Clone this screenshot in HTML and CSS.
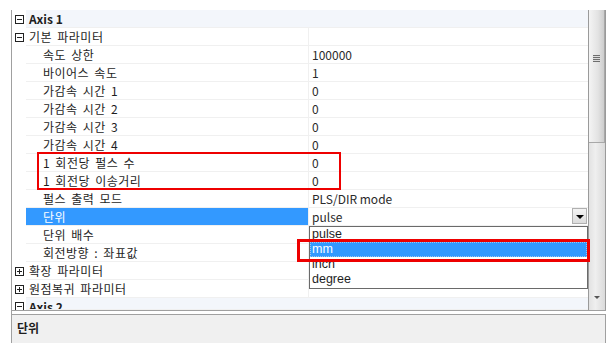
FILE: index.html
```html
<!DOCTYPE html>
<html>
<head>
<meta charset="utf-8">
<link rel="stylesheet" href="styles.css">
</head>
<body>
<div class="pg">
  <div class="main">
    <div class="rows">
      <div class="row cat"><span class="gut"><span class="box minus"></span></span><span class="full bold">Axis 1</span></div>
      <div class="row sub"><span class="gut"><span class="box minus"></span></span><span class="name sublabel">기본 파라미터</span><span class="val"></span></div>
      <div class="row"><span class="gut"></span><span class="name">속도 상한</span><span class="val">100000</span></div>
      <div class="row"><span class="gut"></span><span class="name">바이어스 속도</span><span class="val">1</span></div>
      <div class="row"><span class="gut"></span><span class="name">가감속 시간 1</span><span class="val">0</span></div>
      <div class="row"><span class="gut"></span><span class="name">가감속 시간 2</span><span class="val">0</span></div>
      <div class="row"><span class="gut"></span><span class="name">가감속 시간 3</span><span class="val">0</span></div>
      <div class="row"><span class="gut"></span><span class="name">가감속 시간 4</span><span class="val">0</span></div>
      <div class="row"><span class="gut"></span><span class="name">1 회전당 펄스 수</span><span class="val">0</span></div>
      <div class="row"><span class="gut"></span><span class="name">1 회전당 이송거리</span><span class="val">0</span></div>
      <div class="row"><span class="gut"></span><span class="name">펄스 출력 모드</span><span class="val">PLS/DIR mode</span></div>
      <div class="row"><span class="gut"></span><span class="name selected">단위</span><span class="val edit">pulse<span class="ddbtn"><span class="tri"></span></span></span></div>
      <div class="row"><span class="gut"></span><span class="name">단위 배수</span><span class="val"></span></div>
      <div class="row"><span class="gut"></span><span class="name">회전방향 : 좌표값</span><span class="val"></span></div>
      <div class="row sub"><span class="gut"><span class="box plus"></span></span><span class="name sublabel">확장 파라미터</span><span class="val"></span></div>
      <div class="row sub"><span class="gut"><span class="box plus"></span></span><span class="name sublabel">원점복귀 파라미터</span><span class="val"></span></div>
      <div class="row cat last"><span class="gut"><span class="box minus"></span></span><span class="full bold">Axis 2</span></div>
    </div>
    <div class="scroll">
      <div class="thumb"><span class="grip"></span></div>
      <div class="track"></div>
      <div class="arrow"></div>
    </div>
    <div class="ddlist">
      <div class="item">pulse</div>
      <div class="item sel">mm</div>
      <div class="item">inch</div>
      <div class="item">degree</div>
    </div>
    <div class="redbox r1"></div>
    <div class="redbox r2"></div>
  </div>
  <div class="desc"><span class="dtitle">단위</span></div>
</div>
</body>
</html>
```

FILE: styles.css
```css
html, body {
  margin: 0;
  padding: 0;
  background: #ffffff;
}
body {
  font-family: "Noto Sans CJK KR", "Noto Sans", sans-serif;
  font-size: 12px;
  color: #1e1e1e;
}
.pg {
  margin: 10px 0 0 11px;
  width: 594px;
  height: 333px;
  border-left: 1px solid #a0a0a0;
  display: flex;
  flex-direction: column;
}
.main {
  position: relative;
  height: 300px;
  display: flex;
  border-bottom: 1px solid #a0a0a0;
  overflow: hidden;
}
.rows {
  width: 576px;
  display: flex;
  flex-direction: column;
}
.row {
  height: 18px;
  flex: none;
  display: flex;
  line-height: 17px;
}
.row.last {
  height: 12px;
  overflow: hidden;
  align-items: flex-start;
}
.row.last .full {
  height: 12px;
  line-height: 12px;
  padding-top: 3px;
  box-sizing: border-box;
  overflow: hidden;
}
.row.last .gut {
  height: 12px;
  align-items: flex-start;
  padding-top: 4px;
  overflow: hidden;
}
.gut {
  width: 14px;
  flex: none;
  display: flex;
  align-items: center;
  justify-content: center;
  padding-left: 1px;
  box-sizing: border-box;
}
.name {
  width: 283px;
  flex: none;
  border-right: 1px solid #f0f0f0;
  border-bottom: 1px solid #f0f0f0;
  padding-left: 17px;
  box-sizing: border-box;
  white-space: nowrap;
  letter-spacing: 0.5px;
  word-spacing: 2px;
}
.name.sublabel {
  padding-left: 3px;
}
.val {
  flex: 1;
  border-bottom: 1px solid #f0f0f0;
  padding-left: 3px;
  color: #2a2a2a;
  white-space: nowrap;
  position: relative;
}
.full {
  flex: 1;
  background: #f3f6fb;
  padding-left: 3px;
  border-bottom: 1px solid #f0f0f0;
}
.bold {
  font-weight: bold;
}
.selected {
  background: #3399ff;
  color: #ffffff;
}
.edit {
  display: flex;
  justify-content: space-between;
}
.ddbtn {
  width: 15px;
  height: 16px;
  margin-right: 1px;
  background: linear-gradient(#f4f4f4, #dcdcdc);
  border: 1px solid #b0b0b0;
  box-sizing: border-box;
  display: flex;
  align-items: center;
  justify-content: center;
}
.tri {
  width: 0;
  height: 0;
  border-left: 4px solid transparent;
  border-right: 4px solid transparent;
  border-top: 4px solid #000;
  margin-top: 2px;
}
.box {
  width: 9px;
  height: 9px;
  flex: none;
  border: 1px solid #222;
  box-sizing: border-box;
  position: relative;
  background: #fff;
}
.box::before {
  content: "";
  position: absolute;
  left: 1px;
  top: 3px;
  width: 5px;
  height: 1px;
  background: #222;
}
.box.plus::after {
  content: "";
  position: absolute;
  left: 3px;
  top: 1px;
  width: 1px;
  height: 5px;
  background: #222;
}
.scroll {
  width: 16px;
  flex: none;
  border-left: 1px solid #9a9a9a;
  border-right: 1px solid #9a9a9a;
  background: linear-gradient(90deg, #e2e2e2, #efefef 40%, #dadada);
  display: flex;
  flex-direction: column;
}
.thumb {
  height: 133px;
  flex: none;
  background: linear-gradient(90deg, #f4f4f4, #e3e3e3 60%, #cdcdcd);
  border-right: 1px solid #a8a8a8;
  border-bottom: 1px solid #a8a8a8;
  box-sizing: border-box;
  display: flex;
  justify-content: center;
  padding-top: 45px;
}
.grip {
  width: 7px;
  height: 7px;
  background: repeating-linear-gradient(#6e6e6e 0 1px, #dcdcdc 1px 2px);
}
.track {
  flex: 1;
}
.arrow {
  height: 14px;
  flex: none;
  display: flex;
  justify-content: center;
  align-items: flex-start;
}
.arrow::before {
  content: "";
  width: 0;
  height: 0;
  border-left: 3px solid transparent;
  border-right: 3px solid transparent;
  border-top: 3px solid #555;
}
.ddlist {
  position: absolute;
  left: 297px;
  top: 216px;
  width: 279px;
  border: 1px solid #6a6a6a;
  background: #fff;
  box-sizing: border-box;
  padding: 0 0 1px 0;
}
.item {
  height: 15px;
  line-height: 15px;
  padding-left: 2px;
  color: #1e1e1e;
  font-family: "Liberation Sans", Arial, sans-serif;
  font-size: 12.5px;
}
.item.sel {
  background: #3399ff;
  color: #ffffff;
  outline: 1px dotted #9cc8f0;
  outline-offset: -1px;
}
.redbox {
  position: absolute;
  border: 2px solid #ee0000;
  box-sizing: border-box;
}
.r1 {
  left: 25px;
  top: 142px;
  width: 304px;
  height: 38px;
}
.r2 {
  left: 285px;
  top: 229px;
  width: 293px;
  height: 23px;
  border-width: 3px;
}
.desc {
  flex: 1;
  margin-top: 3px;
  border-top: 1px solid #a0a0a0;
  border-right: 1px solid #a0a0a0;
  background: #f0f0f0;
  padding: 4px 0 0 5px;
}
.dtitle {
  font-weight: bold;
}
```
